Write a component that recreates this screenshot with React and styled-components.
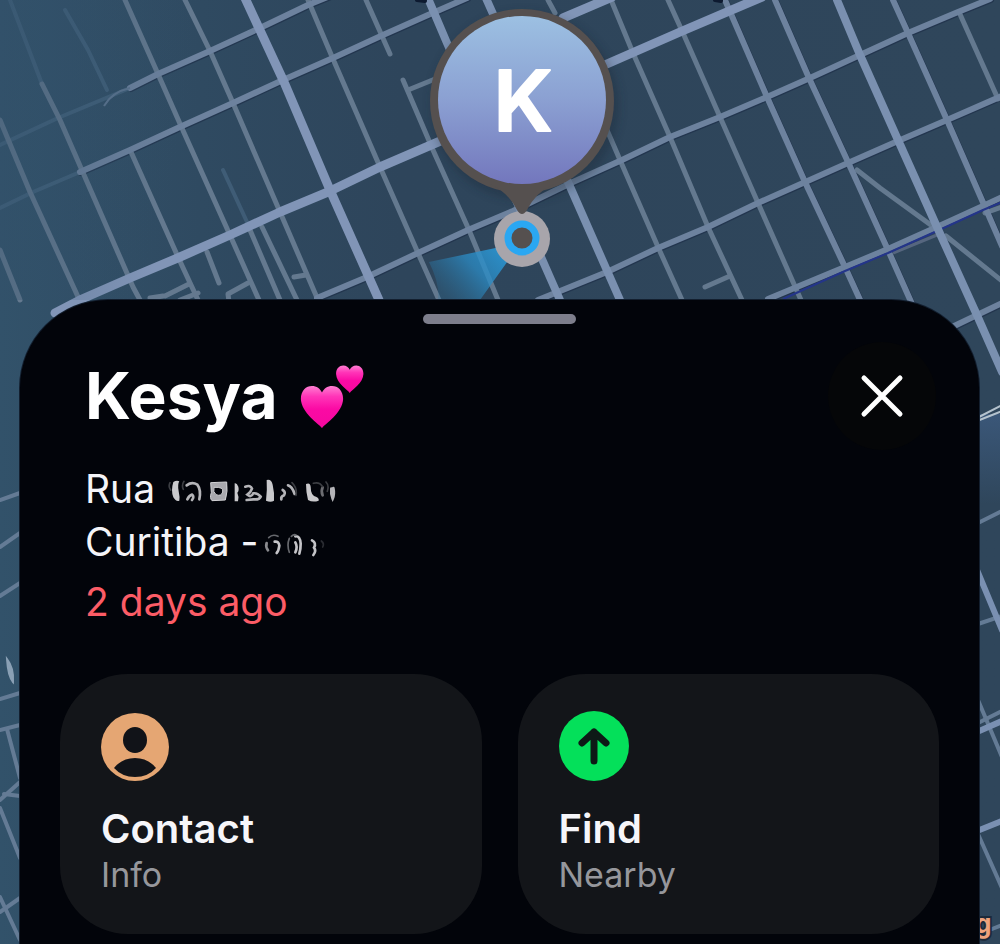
import styled, { createGlobalStyle } from "styled-components";

// road widths: 5 = lane, 6 = street, 8+ = avenue
const lanes = [
  "M0 120L30 192L79 299",
  "M42 84L60 120L133 287L140 300",
  "M131 152L178 257L198 300",
  "M308 0L333 59L380 167L418 253L439 300",
  "M366 0L390 54",
  "M403 80L433 150L469 230L498 300",
  "M548 0L555 13",
  "M607 130L620 160L658 247L682 300",
  "M125 0L158 74L181 126L229 233L259 300",
  "M185 0L210 51L233 103L280 212L318 300",
  "M609 -5L633 53L670 137L708 227L742 300",
  "M668 0L683 33L720 117L758 203L801 300",
  "M959 12L998 99",
  "M408 90L440 77",
  "M165 296L189 284",
  "M150 298L163 296",
  "M180 300L198 293",
  "M207 252L219 283",
  "M229 302L228 294L248 283",
  "M250 230L280 300",
  "M262 227L297 300",
  "M294 277L306 275",
  "M705 287L730 276",
  "M857 170L880 188L935 228",
  "M946 236L1002 281",
  "M985 213L1002 207",
  "M0 250L20 300",
];

const streets = [
  "M725 0L767 97L805 182L845 267L861 302",
  "M775 0L809 78L848 162L888 250L912 304",
  "M893 0L908 33L947 120L985 207L1002 246",
  "M130 88L158 74L210 51L260 28L308 5L330 -4",
  "M80 172L130 150L182 126L233 103L283 80L333 58L383 35L428 15L467 -2",
  "M317 298L367 277L418 253L468 230L513 211L573 182L622 160L670 137L720 117L767 97L810 78L860 55L908 33L958 12L990 -1",
  "M538 300L607 272L658 248L708 227L758 203L848 163L898 141L947 120L1002 96",
  "M768 299L845 267L888 249L937 227L983 206L1002 197",
  "M950 328L1002 303",
];

const avenues = [
  "M427 -4L447 43L508 182L560 300",
  "M485 -4L568 182L620 300",
  "M837 0L860 55L898 140L937 227L976 313L1002 372",
];

const majorRoads = [
  "M245 -2L284 82L330 190L379 300",
  "M55 313L82 299L130 278L180 257L230 235L280 212L328 192L380 167L445 139",
  "M563 18L612 -3",
  "M600 67L680 32L762 -3",
];

const fadedRoads = [
  "M10 0L42 84",
  "M65 10L88 50L107 90",
  "M0 145L58 118L130 88",
  "M0 208L33 192L80 172",
  "M223 170L247 222",
];

const sideRoads = [
  "M0 500L20 493",
  "M0 547L20 533",
  "M0 596L20 583",
  "M0 699L20 693",
  "M0 730L20 725",
  "M7 729L20 778",
  "M0 800L20 782M4 794L20 796",
  "M0 808L20 858",
  "M0 912L20 898",
  "M0 897L20 940",
  "M978 523L1002 511",
  "M978 624L1002 616",
  "M978 700L1002 757",
  "M978 723L1002 711",
  "M978 834L1002 888",
  "M992 929L1002 925",
];

const sideAvenues = [
  "M977 570L1002 630",
  "M977 732L1002 721",
  "M977 831L1002 821",
];

const Roads = ({ paths, width, color, opacity = 1 }) => (
  <g
    fill="none"
    stroke={color}
    strokeWidth={width}
    strokeLinecap="round"
    strokeLinejoin="round"
    opacity={opacity}
  >
    {paths.map((d) => (
      <path key={d} d={d} />
    ))}
  </g>
);

const MapView = () => (
  <MapCanvas
    viewBox="0 0 1000 944"
    preserveAspectRatio="xMidYMin slice"
    role="img"
    aria-label="Map"
  >
    <defs>
      <linearGradient id="water" x1="0" x2="1" y1="0" y2="0">
        <stop offset="0" stopColor="#32526a" />
        <stop offset="0.2" stopColor="#2f4a61" />
        <stop offset="0.4" stopColor="#2e455b" />
        <stop offset="1" stopColor="#2f465b" />
      </linearGradient>
      <linearGradient id="haze" x1="0" x2="1" y1="0" y2="0.35">
        <stop offset="0" stopColor="#32506a" stopOpacity="0.8" />
        <stop offset="1" stopColor="#32506a" stopOpacity="0" />
      </linearGradient>
      <linearGradient id="edge" x1="0" x2="0" y1="0" y2="1">
        <stop offset="0" stopColor="#42628c" stopOpacity="0.6" />
        <stop offset="1" stopColor="#42628c" stopOpacity="0" />
      </linearGradient>
      <linearGradient id="avatar" x1="0" x2="0" y1="0" y2="1">
        <stop offset="0" stopColor="#9cc0e2" />
        <stop offset="0.5" stopColor="#8ba0d2" />
        <stop offset="1" stopColor="#7377bd" />
      </linearGradient>
      <linearGradient id="beam" x1="1" x2="0" y1="0" y2="0.6">
        <stop offset="0" stopColor="#2b9ad8" stopOpacity="0.95" />
        <stop offset="0.5" stopColor="#2b8bc4" stopOpacity="0.75" />
        <stop offset="1" stopColor="#2b6f98" stopOpacity="0.3" />
      </linearGradient>
      <filter id="soft" x="-20%" y="-20%" width="140%" height="140%">
        <feGaussianBlur stdDeviation="5" />
      </filter>
    </defs>

    <rect width="1000" height="944" fill="url(#water)" />
    <Roads paths={fadedRoads} width={4} color="#50708c" opacity={0.5} />
    <g transform="translate(1 1)">
      <Roads paths={streets} width={6} color="#1e2f49" opacity={0.7} />
    </g>
    <Roads paths={lanes} width={5} color="#64798f" />
    <Roads paths={streets} width={6} color="#6d829e" />
    <path d="M104 106Q112 92 130 88" fill="none" stroke="#5c748f" strokeWidth="2" />
    <path d="M893 253L937 235" stroke="#56667f" strokeWidth="3" />
    <path
      d="M783 299L845 271L888 253L937 231L983 210L1002 202"
      fill="none"
      stroke="#24358a"
      strokeWidth="2"
    />
    <Roads paths={avenues} width={8} color="#7a90b0" />
    <Roads paths={majorRoads} width={9} color="#8195b7" />
    <rect width="190" height="300" fill="url(#haze)" opacity="0.6" />

    <Roads paths={sideRoads} width={4} color="#647b95" />
    <Roads paths={sideAvenues} width={6} color="#7a90b2" />
    <path d="M7 659Q14 668 13 682Q8 676 7 659Z" fill="#8aa0b5" stroke="#8aa0b5" strokeWidth="2" />
    <rect x="975" y="414" width="25" height="90" fill="url(#edge)" />
    <path d="M977 418L1002 405M977 421L1002 411" stroke="#b4c2cd" strokeWidth="2" />
    <path d="M417 0L425 1M715 0L721 1" stroke="#0d1a30" strokeWidth="4" strokeLinecap="round" />
    <PlaceLabel x="975" y="933">g</PlaceLabel>

    <path d="M505 246L429 262Q440 284 438 300L480 300L510 258Z" fill="url(#beam)" />

    <circle cx="525" cy="106" r="94" fill="#14202e" opacity="0.3" filter="url(#soft)" />
    <circle cx="522" cy="101" r="92" fill="#55504f" />
    <circle cx="522" cy="239" r="28" fill="#a8a5ab" />
    <path d="M490 184Q508 192 517 210Q522 218 527 210Q536 192 554 184Z" fill="#55504f" />
    <circle cx="522" cy="100" r="84" fill="url(#avatar)" />
    <circle cx="522" cy="238" r="14" fill="#55504f" stroke="#2aa7f2" strokeWidth="7" />
    <Initial x="523" y="131" textAnchor="middle">
      K
    </Initial>
  </MapCanvas>
);

const heart =
  "M50 98C43 88 3 64 2 32C2 12 14 2 27 2C38 2 46 8 50 17C54 8 62 2 73 2C86 2 98 12 98 32C97 64 57 88 50 98Z";

const Hearts = () => (
  <svg width="66" height="66" viewBox="0 -2 66 66" role="img" aria-label="two hearts">
    <defs>
      <linearGradient id="pink" x1="0" x2="0" y1="0" y2="1">
        <stop offset="0" stopColor="#ff7fd2" />
        <stop offset="0.25" stopColor="#ff35b8" />
        <stop offset="0.55" stopColor="#fb0aa4" />
        <stop offset="1" stopColor="#f5089f" />
      </linearGradient>
    </defs>
    <path d={heart} fill="url(#pink)" transform="translate(0 20) scale(0.44)" />
    <path d={heart} fill="url(#pink)" transform="translate(35.5 0) scale(0.285)" />
  </svg>
);

const StreetSmudge = () => (
  <svg width="174" height="33" viewBox="30 22 522 99" aria-hidden="true">
    <g fill="#c9c9cc">
      <path d="M52 52Q62 46 70 50Q64 60 68 80Q72 98 70 108Q60 112 52 98Q44 78 52 52Z" />
      <path d="M236 56Q242 54 247 66Q250 78 244 84Q250 96 246 110L236 110Z" />
      <path d="M332 46Q346 42 350 60Q356 86 354 108Q344 114 330 108Q334 76 332 46Z" />
      <path d="M450 58Q462 52 464 66Q464 92 480 96Q490 100 488 108Q470 114 456 106Q450 84 450 58Z" />
    </g>
    <g fill="none" stroke="#b4b4b8" strokeWidth="8" strokeLinecap="round">
      <path d="M92 62Q108 50 124 60Q136 76 130 104M94 104Q100 92 108 90Q116 96 108 106" />
      <path d="M268 66Q284 60 288 72Q284 84 274 90Q284 100 292 86Q304 84 314 96Q310 106 292 104L272 106" />
      <path d="M376 104Q374 96 384 92Q390 82 380 76M396 62Q408 64 416 88" />
      <path d="M500 68Q494 80 500 92" opacity="0.6" />
      <path d="M526 72Q524 88 530 102Q536 88 532 70" />
    </g>
    <path
      d="M164 54L212 52Q216 80 208 106L168 108Q160 100 166 84ZM174 68Q170 82 180 90Q196 96 200 82Q204 66 174 68Z"
      fill="#a9a9ae"
      fillRule="evenodd"
      stroke="#d2d2d5"
      strokeWidth="3"
    />
    <g fill="none" stroke="#3c3e43" strokeWidth="5" strokeLinecap="round">
      <path d="M42 54Q36 66 44 76M84 50Q76 62 82 74M408 54Q424 70 420 92M472 56Q490 50 500 66M510 52Q520 62 514 80" />
    </g>
  </svg>
);

const StateSmudge = () => (
  <svg width="63" height="31" viewBox="315 187 189 93" aria-hidden="true">
    <g fill="none" stroke="#c4c4c8" strokeWidth="8" strokeLinecap="round">
      <path d="M326 238Q322 250 330 260" opacity="0.7" />
      <path d="M350 234Q362 232 364 246Q362 262 356 268" />
      <path d="M412 218Q426 216 428 240Q428 258 424 270M412 236Q420 250 412 266" />
      <path d="M462 230Q476 238 468 252Q476 262 466 274" />
    </g>
    <g fill="none" stroke="#66686d" strokeWidth="5" strokeLinecap="round">
      <path d="M332 222Q344 210 360 218M394 224Q386 244 394 266M400 218Q408 210 414 214" />
      <path d="M490 232Q500 240 494 250" opacity="0.4" />
    </g>
  </svg>
);

const CloseIcon = () => (
  <svg width="46" height="46" viewBox="0 0 46 46" aria-hidden="true">
    <path d="M5 5L41 41M41 5L5 41" stroke="#fff" strokeWidth="5" strokeLinecap="round" />
  </svg>
);

const ContactIcon = () => (
  <svg width="70" height="70" viewBox="0 0 70 70" aria-hidden="true">
    <circle cx="34" cy="36" r="34" fill="#e5a673" />
    <ellipse cx="34" cy="29" rx="12" ry="13" fill="#111318" />
    <path d="M13 57Q21 47 34 47Q47 47 55 57Q47 66 34 66Q21 66 13 57Z" fill="#111318" />
  </svg>
);

const FindIcon = () => (
  <svg width="70" height="70" viewBox="0 0 70 70" aria-hidden="true">
    <circle cx="35" cy="35" r="35" fill="#04e05a" />
    <path
      d="M35 50V21M23 32L35 21L47 32"
      fill="none"
      stroke="#0d1a16"
      strokeWidth="7"
      strokeLinecap="round"
      strokeLinejoin="round"
    />
  </svg>
);

const actions = [
  { title: "Contact", text: "Info", Icon: ContactIcon },
  { title: "Find", text: "Nearby", Icon: FindIcon },
];

const App = () => {
  return (
    <Page>
      <GlobalStyle />
      <MapView />
      <Sheet>
        <Handle />
        <Header>
          <Name>
            Kesya <Hearts />
          </Name>
          <BtnClose aria-label="Close">
            <CloseIcon />
          </BtnClose>
        </Header>
        <Details>
          <Line>
            Rua <StreetSmudge />
          </Line>
          <Line $tight>
            Curitiba - <StateSmudge />
          </Line>
          <LastSeen>2 days ago</LastSeen>
        </Details>
        <Actions>
          {actions.map(({ title, text, Icon }) => (
            <Card key={title}>
              <Icon />
              <CardTitle>{title}</CardTitle>
              <CardText>{text}</CardText>
            </Card>
          ))}
        </Actions>
      </Sheet>
    </Page>
  );
};

const GlobalStyle = createGlobalStyle`
  * {
    box-sizing: border-box;
  }
  body {
    margin: 0;
    background: #2f465b;
    font-family: Inter, "Liberation Sans", sans-serif;
  }
`;

const Page = styled.div`
  position: relative;
  min-height: 100vh;
  display: flex;
  flex-direction: column;
  overflow: hidden;
`;
const MapCanvas = styled.svg`
  position: absolute;
  inset: 0;
  width: 100%;
  height: 100%;
`;
const Initial = styled.text`
  font-size: 84px;
  font-weight: 600;
  fill: #fff;
  stroke: #fff;
  stroke-width: 2px;
  stroke-linejoin: round;
`;
const PlaceLabel = styled.text`
  font-size: 26px;
  font-weight: 700;
  fill: #eda27c;
  stroke: #1c2a3a;
  stroke-width: 4px;
  paint-order: stroke;
`;

const Sheet = styled.main`
  position: relative;
  flex: 1;
  display: flex;
  flex-direction: column;
  margin: 300px 21px 0 20px;
  padding: 14px 40px 10px;
  border-radius: 88px 88px 0 0;
  background: #02040a;
  box-shadow: 0 0 0 1px #131f2f;
`;
const Handle = styled.div`
  align-self: center;
  width: 153px;
  height: 10px;
  border-radius: 5px;
  background: #7d7e8c;
`;
const Header = styled.header`
  display: flex;
  align-items: center;
  justify-content: space-between;
  margin-top: 18px;
  padding: 0 3px 0 25px;
`;
const Name = styled.h1`
  display: flex;
  align-items: center;
  gap: 22px;
  margin: 0;
  color: #fff;
  font-size: 64px;
  font-weight: 700;
  line-height: 80px;
`;
const BtnClose = styled.button`
  display: flex;
  align-items: center;
  justify-content: center;
  width: 108px;
  height: 108px;
  padding: 0;
  border: 0;
  border-radius: 50%;
  background: #050608;
  cursor: pointer;
`;

const Details = styled.div`
  margin-top: 12px;
  padding-left: 25px;
  font-size: 39px;
  line-height: 53px;
`;
const Line = styled.div`
  display: flex;
  align-items: center;
  gap: ${(props) => (props.$tight ? "4px" : "11px")};
  color: #f4f4f8;
`;
const LastSeen = styled.div`
  margin-top: 7px;
  color: #fc5c66;
`;

const Actions = styled.div`
  display: grid;
  grid-template-columns: 1fr 1fr;
  gap: 36px;
  margin-top: 46px;
`;
const Card = styled.button`
  display: flex;
  flex-direction: column;
  align-items: flex-start;
  padding: 37px 41px;
  border: 0;
  border-radius: 68px;
  background: #131519;
  font-family: inherit;
  text-align: left;
  cursor: pointer;
`;
const CardTitle = styled.span`
  margin-top: 24px;
  color: #f6f6fa;
  font-size: 40px;
  font-weight: 600;
  line-height: 48px;
`;
const CardText = styled.span`
  color: #96979c;
  font-size: 34px;
  line-height: 44px;
`;

export default App;
